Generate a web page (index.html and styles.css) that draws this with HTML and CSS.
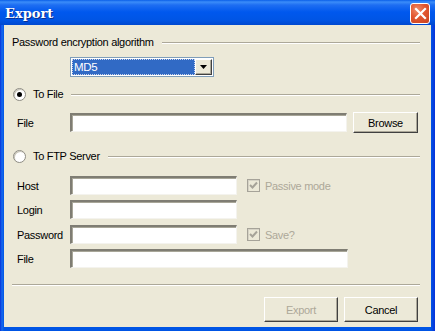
FILE: index.html
```html
<!DOCTYPE html>
<html>
<head>
<meta charset="utf-8">
<link rel="stylesheet" href="styles.css">
</head>
<body>
<div class="window">
  <div class="titlebar">
    <span class="title">Export</span>
    <div class="close">
      <svg width="13" height="13" viewBox="0 0 13 13"><path d="M2 2 L11 11 M11 2 L2 11" stroke="#fff" stroke-width="2.2" stroke-linecap="square"/></svg>
    </div>
  </div>
  <div class="client">
    <div class="group-head">
      <span class="gtext">Password encryption algorithm</span>
      <span class="etch"></span>
    </div>
    <div class="select-row">
      <div class="select">
        <div class="sel-value"><span>MD5</span></div>
        <div class="sel-btn"><svg width="7" height="4" viewBox="0 0 7 4"><path d="M0 0 H7 L3.5 4 Z" fill="#000"/></svg></div>
      </div>
    </div>
    <div class="group-head radio-head head-file">
      <span class="radio checked"><span class="dot"></span></span>
      <span class="gtext">To File</span>
      <span class="etch"></span>
    </div>
    <div class="row row-file">
      <span class="label">File</span>
      <span class="input wide"></span>
      <span class="button browse">Browse</span>
    </div>
    <div class="group-head radio-head head-ftp">
      <span class="radio"></span>
      <span class="gtext">To FTP Server</span>
      <span class="etch"></span>
    </div>
    <div class="row row-host">
      <span class="label">Host</span>
      <span class="input short"></span>
      <span class="check"><svg width="9" height="9" viewBox="0 0 9 9"><path d="M1 4 L3.5 6.5 L8 1.5" stroke="#A6A399" stroke-width="2" fill="none"/></svg></span>
      <span class="disabled-text">Passive mode</span>
    </div>
    <div class="row row-login">
      <span class="label">Login</span>
      <span class="input short"></span>
    </div>
    <div class="row row-pass">
      <span class="label">Password</span>
      <span class="input short"></span>
      <span class="check"><svg width="9" height="9" viewBox="0 0 9 9"><path d="M1 4 L3.5 6.5 L8 1.5" stroke="#A6A399" stroke-width="2" fill="none"/></svg></span>
      <span class="disabled-text">Save?</span>
    </div>
    <div class="row row-file2">
      <span class="label">File</span>
      <span class="input wide2"></span>
    </div>
    <div class="separator"></div>
    <div class="buttons">
      <span class="button disabled">Export</span>
      <span class="button">Cancel</span>
    </div>
  </div>
</div>
</body>
</html>
```
FILE: styles.css
```css
* { box-sizing: border-box; }
html, body { margin: 0; padding: 0; }
body {
  width: 435px;
  height: 331px;
  overflow: hidden;
  font-family: "Liberation Sans", Arial, sans-serif;
  font-size: 11px;
  letter-spacing: -0.3px;
  color: #000;
}
.window {
  width: 435px;
  height: 331px;
  display: flex;
  flex-direction: column;
  background: linear-gradient(to right, #0831D9 0, #166AEE 2px, #0055E5 4px, #0055E5 431px, #0831D9 435px);
}
.titlebar {
  height: 25px;
  flex: none;
  display: flex;
  align-items: center;
  justify-content: space-between;
  padding: 0 5px 0 5px;
  background: linear-gradient(to bottom, #0A5FE8 0, #3B8DF9 2px, #1E6EF2 5px, #0058EE 12px, #0055E5 20px, #0048CF 25px);
}
.title {
  font-family: "DejaVu Serif", "Liberation Serif", serif;
  font-weight: bold;
  font-size: 13px;
  color: #fff;
  letter-spacing: 0;
  text-shadow: 1px 1px 0 #0A2E8C;
  margin-top: 1px;
}
.close {
  width: 20px;
  height: 21px;
  margin-top: 1px;
  border: 1px solid #fff;
  border-radius: 3px;
  background: radial-gradient(circle at 35% 30%, #EF8C6C 0, #E2562F 45%, #C8421E 100%);
  display: flex;
  align-items: center;
  justify-content: center;
}
.client {
  flex: 1;
  margin: 0 4px 4px 4px;
  background: #ECE9D8;
  padding: 10px 11px 0 8px;
  display: flex;
  flex-direction: column;
}
.group-head {
  height: 14px;
  display: flex;
  align-items: center;
  line-height: 14px;
}
.gtext { white-space: nowrap; }
.etch {
  flex: 1;
  height: 2px;
  margin-left: 8px;
  border-top: 1px solid #ACA899;
  border-bottom: 1px solid #fff;
  margin-top: 1px;
}
.select-row {
  margin-top: 8px;
  padding-left: 58px;
  height: 20px;
}
.select {
  width: 144px;
  height: 20px;
  display: flex;
  border: 1px solid #7F9DB9;
  background: #fff;
  padding: 1px;
}
.sel-value {
  flex: 1;
  background: #316AC5;
  color: #fff;
  border: 1px dotted #C8D4EC;
  display: flex;
  align-items: center;
  padding-left: 1px;
  font-size: 11.5px;
}
.sel-btn {
  width: 17px;
  background: #ECE9D8;
  border: 1px solid;
  border-color: #fff #404040 #404040 #fff;
  box-shadow: inset -1px -1px 0 #ACA899;
  display: flex;
  align-items: center;
  justify-content: center;
}
.radio-head .gtext { margin-left: 7px; }
.head-file { margin-top: 10px; }
.head-ftp { margin-top: 16px; }
.radio {
  width: 13px;
  height: 13px;
  border-radius: 50%;
  background: #fff;
  border: 1px solid #8E8C83;
  box-shadow: inset 1px 1px 0 #C9C6B8;
  display: flex;
  align-items: center;
  justify-content: center;
  flex: none;
  margin-left: 1px;
}
.radio .dot {
  width: 5px;
  height: 5px;
  border-radius: 50%;
  background: #000;
}
.row {
  display: flex;
  align-items: center;
  height: 19px;
}
.row-file { margin-top: 11px; height: 21px; }
.row-host { margin-top: 13px; }
.row-login { margin-top: 5px; }
.row-pass { margin-top: 6px; }
.row-file2 { margin-top: 5px; }
.label {
  width: 58px;
  padding-left: 5px;
  flex: none;
}
.input {
  height: 19px;
  background: #fff;
  border-style: solid;
  border-width: 2px 1px 1px 2px;
  border-color: #7F7D73 #F4F3EE #F4F3EE #7F7D73;
  box-shadow: inset 1px 1px 0 #A8A698;
  flex: none;
}
.wide { width: 277px; }
.wide2 { width: 278px; }
.short { width: 167px; }
.button {
  display: flex;
  align-items: center;
  justify-content: center;
  background: #ECE9D8;
  border: 1px solid;
  border-color: #fff #404040 #404040 #fff;
  box-shadow: inset -1px -1px 0 #ACA899;
  flex: none;
}
.browse {
  width: 65px;
  height: 21px;
  margin-left: 6px;
}
.check {
  width: 13px;
  height: 13px;
  margin-left: 10px;
  border: 1px solid #A6A399;
  background: #ECE9D8;
  box-shadow: inset 1px 1px 0 #D6D3C6;
  display: flex;
  align-items: center;
  justify-content: center;
  flex: none;
}
.disabled-text {
  color: #ACA899;
  margin-left: 5px;
}
.separator {
  margin-top: 16px;
  height: 2px;
  border-top: 1px solid #ACA899;
  border-bottom: 1px solid #fff;
}
.buttons {
  margin-top: 11px;
  display: flex;
  justify-content: flex-end;
  gap: 6px;
  padding-right: 2px;
}
.buttons .button {
  width: 74px;
  height: 25px;
}
.button.disabled { color: #ACA899; }
```
